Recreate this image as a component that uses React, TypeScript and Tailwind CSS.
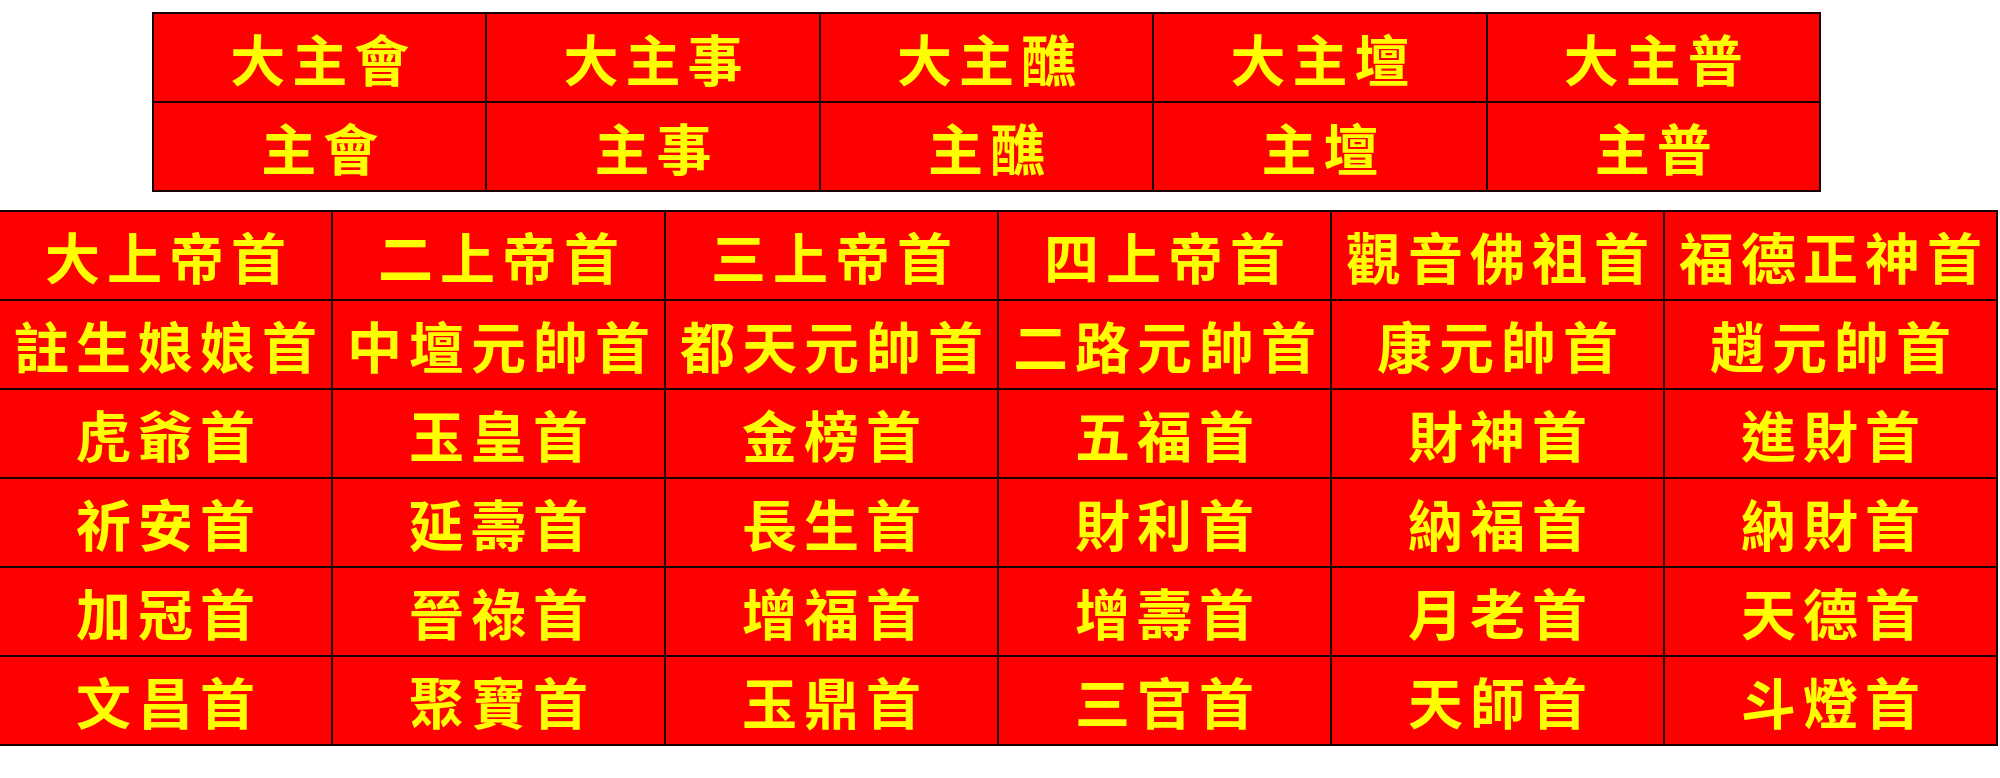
const TOP = [
  ['大主會', '大主事', '大主醮', '大主壇', '大主普'],
  ['主會', '主事', '主醮', '主壇', '主普'],
]

const BOTTOM = [
  ['大上帝首', '二上帝首', '三上帝首', '四上帝首', '觀音佛祖首', '福德正神首'],
  ['註生娘娘首', '中壇元帥首', '都天元帥首', '二路元帥首', '康元帥首', '趙元帥首'],
  ['虎爺首', '玉皇首', '金榜首', '五福首', '財神首', '進財首'],
  ['祈安首', '延壽首', '長生首', '財利首', '納福首', '納財首'],
  ['加冠首', '晉祿首', '增福首', '增壽首', '月老首', '天德首'],
  ['文昌首', '聚寶首', '玉鼎首', '三官首', '天師首', '斗燈首'],
]

function Cell({ text }: { text: string }) {
  return (
    <div className="flex h-[89px] items-center justify-center border-b-2 border-r-2 border-[#1a0000] bg-[#ff0000]">
      <span className="pl-[7px] text-[55px] leading-none font-semibold tracking-[7px] text-[#ffff00]">{text}</span>
    </div>
  )
}

export default function App() {
  return (
    <div
      className="h-[778px] w-[2000px] overflow-hidden bg-white"
      style={{ fontFamily: '"Noto Sans CJK TC", "Noto Sans CJK SC", sans-serif' }}
    >
      <div className="ml-[152px] mt-[12px] grid w-[1669px] grid-cols-5 border-l-2 border-t-2 border-[#1a0000]">
        {TOP.flat().map((t, i) => (
          <Cell key={i} text={t} />
        ))}
      </div>
      <div className="mt-[18px] grid w-[1998px] grid-cols-6 border-t-2 border-[#1a0000]">
        {BOTTOM.flat().map((t, i) => (
          <Cell key={i} text={t} />
        ))}
      </div>
    </div>
  )
}
